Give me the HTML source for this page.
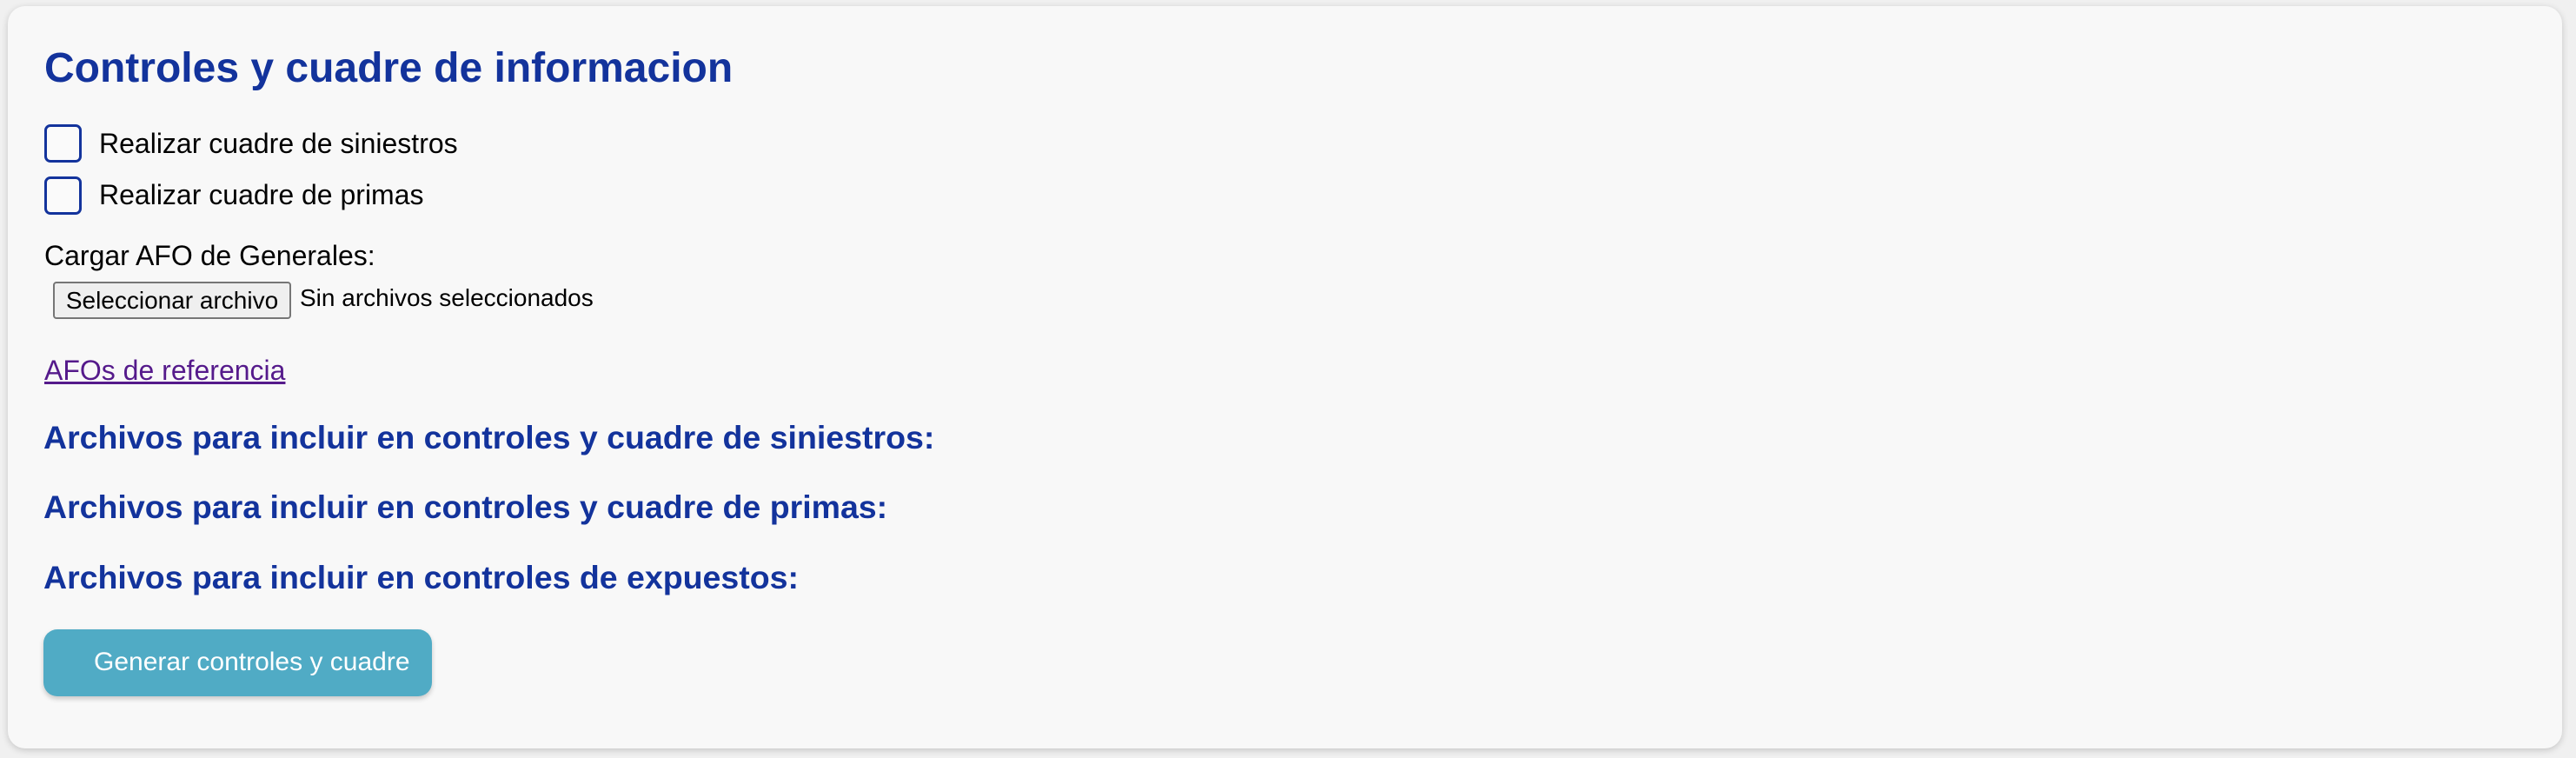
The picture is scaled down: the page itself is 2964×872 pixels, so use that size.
<!DOCTYPE html>
<html><head><meta charset="utf-8"><style>
html,body{margin:0;padding:0;width:2964px;height:872px;background:#f0f0f0;overflow:hidden;font-family:"Liberation Sans",Arial,sans-serif}
.card{position:absolute;left:9px;top:7px;width:2939px;height:854px;background:#f8f8f8;border-radius:20px;box-shadow:0 2px 8px rgba(0,0,0,0.18)}
.t{position:absolute;line-height:1;white-space:nowrap}
.h2{font-size:48px;font-weight:bold;color:#13339c}
.h3{font-size:37.5px;font-weight:bold;color:#13339c}
.l{font-size:32px;color:#000}
.cb{position:absolute;left:51px;width:37px;height:38px;border:3px solid #13339c;border-radius:7px;background:#fafafa}
.fb{position:absolute;left:61px;top:324px;width:270px;height:39px;border:2px solid #767676;border-radius:4px;background:#efefef;font-size:28px;line-height:39px;text-align:center;color:#000;white-space:nowrap}
.btn{position:absolute;left:50px;top:724px;width:447px;height:77px;background:#50abc5;border-radius:16px;box-shadow:0 3px 6px rgba(0,0,0,0.2)}
.bt{position:absolute;left:108px;top:747px;color:#fff;font-size:30px;line-height:1;white-space:nowrap}
</style></head><body>
<div class="card"></div>
<div class="t h2" style="left:51px;top:55px">Controles y cuadre de informacion</div>
<div class="cb" style="top:143px"></div>
<div class="t l" style="left:114px;top:149px">Realizar cuadre de siniestros</div>
<div class="cb" style="top:203px"></div>
<div class="t l" style="left:114px;top:208px">Realizar cuadre de primas</div>
<div class="t l" style="left:51px;top:278px">Cargar AFO de Generales:</div>
<div class="fb">Seleccionar archivo</div>
<div class="t" style="left:345px;top:329px;font-size:28px">Sin archivos seleccionados</div>
<div class="t l" style="left:51px;top:410px;color:#551a8b;text-decoration:underline">AFOs de referencia</div>
<div class="t h3" style="left:50px;top:485px">Archivos para incluir en controles y cuadre de siniestros:</div>
<div class="t h3" style="left:50px;top:565px">Archivos para incluir en controles y cuadre de primas:</div>
<div class="t h3" style="left:50px;top:646px">Archivos para incluir en controles de expuestos:</div>
<div class="btn"></div>
<div class="bt">Generar controles y cuadre</div>
</body></html>
